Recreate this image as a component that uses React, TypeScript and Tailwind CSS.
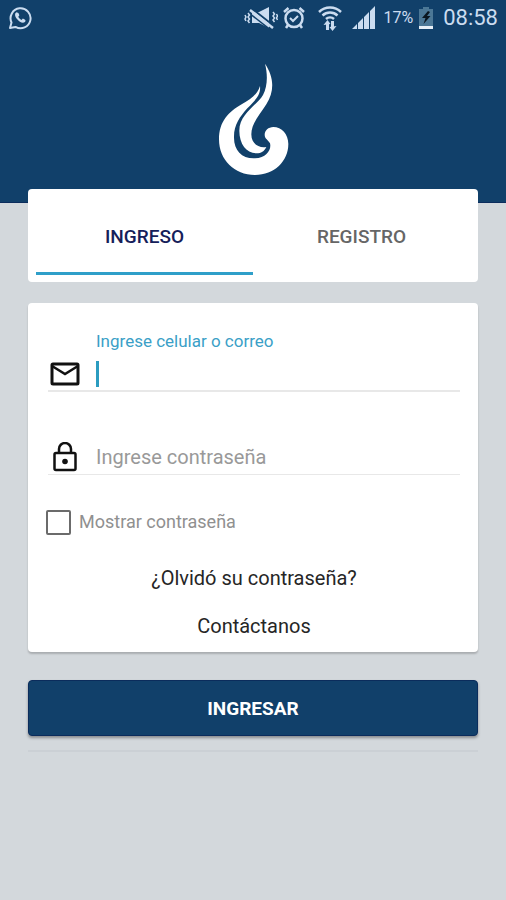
import React, { useState } from 'react';

const WhatsAppIcon: React.FC = () => (
    <svg viewBox="0 0 24 24" className="w-6 h-6" fill="none" stroke="currentColor" strokeWidth="2">
        <path d="M2 22l1.500-5.500A10 10 0 1 1 7.500 20.900z" strokeLinejoin="round" />
        <path d="M8.600 6.200c-2.200 1-1.900 4 .4 6.800 2.400 2.900 5.700 4.900 7.900 3.100 1-.9.8-1.900-.2-2.500l-1.800-1-1.400 1.300c-1.600-.7-2.600-1.800-3.200-3.200l1.100-1.400-1-2.400z" fill="currentColor" stroke="none" />
    </svg>
);

const MutedIcon: React.FC = () => (
    <svg viewBox="0 0 34 24" className="w-[34px] h-6" fill="none" stroke="currentColor" strokeWidth="1.5">
        <path d="M8 6h7l10-5v21l-10-5H8z" fill="currentColor" stroke="none" />
        <path d="M7 2l23 18" stroke="#11406a" strokeWidth="2" />
        <path d="M6 4l23 18" strokeWidth="2.500" />
        <path d="M5 7l23 18" stroke="#11406a" strokeWidth="1.500" />
        <path d="M4 7l1.500 2-1.500 2 1.500 2-1.500 2 1.500 2M1 9l1 2-1 2 1 2M29 6l1.500 2-1.500 2 1.500 2-1.500 2 1.500 2M32.500 8l1 2-1 2 1 2" />
    </svg>
);

const AlarmIcon: React.FC = () => (
    <svg viewBox="0 0 24 24" className="w-6 h-6" fill="none" stroke="currentColor" strokeWidth="2.500">
        <circle cx="12" cy="12.500" r="8.500" />
        <path d="M8 12l3 3 5-5" strokeWidth="2" />
        <path d="M2 6l4.500-4M22 6l-4.500-4M6 19l-2 3M18 19l2 3" />
    </svg>
);

const WifiIcon: React.FC = () => (
    <svg viewBox="0 0 24 26" className="w-6 h-[26px]" fill="none" stroke="currentColor" strokeWidth="2.500">
        <path d="M1 7a16 16 0 0 1 22 0M4.500 10.500a11 11 0 0 1 15 0M8 14a6 6 0 0 1 8 0" />
        <path d="M9.500 25v-7M14.500 16v7" strokeWidth="3" />
        <path d="M5.500 20l4-5 3 4zM11.500 22l3 4 4-5z" fill="currentColor" stroke="none" />
    </svg>
);

const SignalIcon: React.FC = () => (
    <svg viewBox="0 0 24 24" className="w-6 h-6" fill="currentColor">
        <path d="M0 23l5-5v5zM6 23v-6l5-5v11zM12 23V11l5-5v17zM18 23V5l5-5v23z" />
    </svg>
);

const BatteryIcon: React.FC = () => (
    <svg viewBox="0 0 14 24" className="w-[14px] h-6">
        <path d="M4 1h6v2h4v20H0V3h4z" fill="#4b7796" />
        <path d="M0 20h14v3H0z" fill="#e8f0f8" />
        <path d="M9 5L3 12h3.500L4.500 18l7-8H8L11 6z" fill="#0a1620" />
    </svg>
);

const FlameLogo: React.FC = () => (
    <svg viewBox="36 21 216 339" className="w-[72px] h-[113px]" fill="#ffffff">
        <path d="M165 90C156 118 136 129 110 145C70 168 42 197 42 250C42 312 88 357 150 357C208 357 250 315 250 264C250 234 230 213 205 213C190 213 179 224 179 236C179 249 190 251 195 262C200 280 185 305 150 307C112 309 87 284 87 245C86 207 105 182 127 157C149 134 168 118 165 90z" />
        <path d="M180 23C189 58 187 92 174 117C155 149 103 174 103 224C103 265 125 292 155 292C168 292 178 286 184 273C163 277 139 265 139 235C139 202 164 177 184 145C211 102 205 60 180 23z" />
    </svg>
);

const MailIcon: React.FC = () => (
    <svg viewBox="0 0 30 24" className="w-[30px] h-6 shrink-0" fill="none" stroke="#111111" strokeWidth="3">
        <rect x="2" y="2" width="26" height="20" rx="1" />
        <path d="M2 4l13 8 13-8" strokeWidth="2.500" />
    </svg>
);

const LockIcon: React.FC = () => (
    <svg viewBox="0 0 30 30" className="w-[30px] h-[30px] shrink-0" fill="none" stroke="#111111" strokeWidth="2.500">
        <rect x="4.500" y="11" width="21" height="17" rx="1.500" />
        <path d="M9 11V7a6 6 0 0 1 12 0v4" />
        <circle cx="15" cy="19.500" r="2.800" fill="#111111" stroke="none" />
    </svg>
);

const StatusBar: React.FC = () => (
    <div className="h-9 px-2 flex items-center justify-between text-[#cbdcf0]">
        <WhatsAppIcon />
        <div className="flex items-center">
            <MutedIcon />
            <span className="ml-1"><AlarmIcon /></span>
            <span className="ml-3"><WifiIcon /></span>
            <span className="ml-2.5"><SignalIcon /></span>
            <span className="ml-2 text-base">17%</span>
            <span className="ml-1.5"><BatteryIcon /></span>
            <span className="ml-2.5 text-[22px] leading-none">08:58</span>
        </div>
    </div>
);

const App: React.FC = () => {
    const [tab, setTab] = useState<'login' | 'register'>('login');
    const [user, setUser] = useState('');
    const [password, setPassword] = useState('');
    const [showPassword, setShowPassword] = useState(false);

    return (
        <div className="min-h-screen bg-[#d3d8dc] font-[Roboto,sans-serif]">
            <header className="bg-[#11406a] border-b border-[#0b2c5c] pb-[26px]">
                <StatusBar />
                <div className="mt-[27px] flex justify-center">
                    <FlameLogo />
                </div>
            </header>

            <main className="relative -mt-[14px] px-7">
                {/* Tabs */}
                <div role="tablist" className="h-[93px] px-2 grid grid-cols-2 bg-white rounded-[4px] text-[19px] font-medium">
                    <button
                        role="tab"
                        aria-selected={tab === 'login'}
                        onClick={() => setTab('login')}
                        className={`mb-[7px] pt-3.5 border-b-[3px] ${tab === 'login' ? 'border-[#2f9fc9] text-[#15205a]' : 'border-transparent text-[#666666]'}`}
                    >
                        INGRESO
                    </button>
                    <button
                        role="tab"
                        aria-selected={tab === 'register'}
                        onClick={() => setTab('register')}
                        className={`mb-[7px] pt-3.5 border-b-[3px] ${tab === 'register' ? 'border-[#2f9fc9] text-[#15205a]' : 'border-transparent text-[#666666]'}`}
                    >
                        REGISTRO
                    </button>
                </div>

                <form onSubmit={(e) => e.preventDefault()}>
                    <div className="mt-[21px] pt-[26px] pb-3 pl-5 pr-[18px] bg-white rounded-[4px] shadow-[0_2px_2px_rgba(0,0,0,0.2)]">
                        <label htmlFor="user" className="block ml-12 text-[17px] leading-6 text-[#3b9fc7]">
                            Ingrese celular o correo
                        </label>
                        <div className="h-[39px] pt-1 pl-0.5 flex items-center border-b-2 border-[#e8e8e8]">
                            <MailIcon />
                            {user === '' && <span className="ml-4 -mr-[3px] w-[3px] h-[26px] bg-[#2b9cc0]" />}
                            <input
                                id="user"
                                type="text"
                                value={user}
                                onChange={(e) => setUser(e.target.value)}
                                className={`flex-1 min-w-0 text-xl outline-none ${user === '' ? 'caret-transparent' : 'ml-4'}`}
                            />
                        </div>

                        <div className="mt-[47px] h-9 pl-0.5 flex items-center border-b border-[#e8e8e8]">
                            <LockIcon />
                            <input
                                id="password"
                                type={showPassword ? 'text' : 'password'}
                                aria-label="Ingrese contraseña"
                                placeholder="Ingrese contraseña"
                                value={password}
                                onChange={(e) => setPassword(e.target.value)}
                                className="ml-4 flex-1 min-w-0 text-xl outline-none placeholder:text-[#999999]"
                            />
                        </div>

                        <div className="-ml-0.5 mt-[33px] flex items-center gap-2">
                            <input
                                id="show"
                                type="checkbox"
                                checked={showPassword}
                                onChange={(e) => setShowPassword(e.target.checked)}
                                className="w-[25px] h-[25px] appearance-none border-2 border-[#6b6b6b] rounded-[2px] checked:bg-[#2f9fc9]"
                            />
                            <label htmlFor="show" className="text-[18px] leading-7 text-[#909090]">
                                Mostrar contraseña
                            </label>
                        </div>

                        <div className="mt-7 flex flex-col items-center gap-5 text-xl leading-7 text-[#262626]">
                            <a href="#recuperar">¿Olvidó su contraseña?</a>
                            <a href="#contacto">Contáctanos</a>
                        </div>
                    </div>

                    <button
                        type="submit"
                        className="mt-7 w-full h-14 pt-0.5 bg-[#11406a] border border-[#0b2c5c] rounded-[4px] shadow-[0_2px_3px_rgba(0,0,0,0.35)] text-[19px] font-bold text-white"
                    >
                        INGRESAR
                    </button>
                </form>
                <hr className="mt-[14px] border-t-2 border-[#cbd0d5]" />
            </main>
        </div>
    );
};

export default App;
